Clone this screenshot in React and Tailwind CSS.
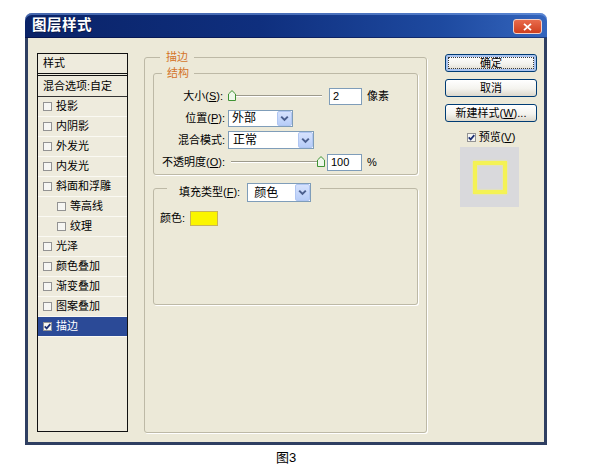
import React from "react";

function Check({ checked }) {
  return (
    <span className="w-[9px] h-[9px] border border-[#939393] bg-[#f6f6f3] flex items-center justify-center shrink-0">
      {checked && (
        <svg width="7" height="7" viewBox="0 0 7 7">
          <path d="M0.7 3.3 L2.7 5.4 L6.3 1.1" stroke="#1b2f74" strokeWidth="1.7" fill="none" />
        </svg>
      )}
    </span>
  );
}

function Arrow() {
  return (
    <span className="w-[15px] h-full bg-[linear-gradient(to_bottom,#d6e2fd,#b7cdf8)] border border-[#b0c6f2] rounded-[2px] flex items-center justify-center shrink-0">
      <svg width="9" height="7" viewBox="0 0 9 7">
        <path d="M1.2 1.6 L4.5 4.9 L7.8 1.6" stroke="#4b5f8e" strokeWidth="2" fill="none" />
      </svg>
    </span>
  );
}

function Thumb() {
  return (
    <svg width="8" height="11" viewBox="0 0 8 11">
      <path d="M0.5 4 L4 0.6 L7.5 4 L7.5 10.5 L0.5 10.5 Z" fill="#eef7ea" stroke="#3f9334" strokeWidth="1" />
    </svg>
  );
}

function Track({ className }) {
  return <div className={"h-[2px] border-t border-[#9d9a8c] bg-white " + className}></div>;
}

function Button({ children, primary }) {
  return (
    <div
      className={
        "h-[18px] w-full rounded-[3px] border border-[#003c74] bg-[linear-gradient(to_bottom,#ffffff_0%,#f4f3ee_55%,#dcd8cc_100%)] flex items-stretch text-[11px] leading-none text-black " +
        (primary ? "p-[2px] shadow-[inset_0_0_0_2px_#a9c3ef]" : "p-[1px]")
      }
    >
      <span
        className={
          "flex-1 flex items-center justify-center " +
          (primary ? "border border-dotted border-[#3a3a3a]" : "")
        }
      >
        {children}
      </span>
    </div>
  );
}

const items = [
  { t: "投影" },
  { t: "内阴影" },
  { t: "外发光" },
  { t: "内发光" },
  { t: "斜面和浮雕" },
  { t: "等高线", i: true },
  { t: "纹理", i: true },
  { t: "光泽" },
  { t: "颜色叠加" },
  { t: "渐变叠加" },
  { t: "图案叠加" },
  { t: "描边", sel: true },
];

export default function App() {
  return (
    <div className="w-[591px] h-[472px] bg-white pt-[13px] pl-[25px] font-['Liberation_Sans','Noto_Sans_CJK_SC',sans-serif] text-black overflow-hidden">
      <div className="w-[522px] flex flex-col">
        {/* Title bar */}
        <div className="h-[25px] rounded-t-[7px] bg-[linear-gradient(to_right,#0a2368_0%,#0f2f7e_45%,#1e4aa0_80%,#3465bd_100%)] shadow-[inset_0_2px_0_rgba(120,160,230,0.55),inset_0_-1px_0_rgba(0,0,40,0.4)] flex items-center justify-between pl-[7px] pr-[5px]">
          <span className="text-white font-bold text-[14.5px] leading-none tracking-[0.5px] [text-shadow:1px_1px_0_#0a1a48]">
            图层样式
          </span>
          <span className="w-[29px] h-[15px] mt-[2px] rounded-[3px] border border-[#f2d0c6] bg-[linear-gradient(to_bottom,#e96b4c,#cf3f1f)] flex items-center justify-center">
            <svg width="9" height="8" viewBox="0 0 9 8">
              <path d="M1 0.8 L8 7.2 M8 0.8 L1 7.2" stroke="white" strokeWidth="1.8" />
            </svg>
          </span>
        </div>

        {/* Body */}
        <div className="h-[407px] bg-[#ece9d8] border-x-[3px] border-b-[3px] border-[#2f3f62] flex items-start pl-[9px] text-[11px] leading-none">
          {/* Left list */}
          <div className="mt-[15px] w-[91px] h-[379px] border border-[#111] bg-[#eeebdd] flex flex-col">
            <div className="h-[22px] border-b-[3px] border-double border-[#111] flex items-center pl-[5px]">
              样式
            </div>
            <div className="h-[21px] border-b border-[#333] flex items-center pl-[5px]">
              混合选项:自定
            </div>
            {items.map((it) => (
              <div
                key={it.t}
                className={
                  "h-[20px] flex items-center gap-[4px] border-b border-[#faf9f3] " +
                  (it.i ? "pl-[19px] " : "pl-[5px] ") +
                  (it.sel ? "bg-[#2b4a97] text-white border-[#b9c8ea]" : "")
                }
              >
                <Check checked={it.sel} />
                <span>{it.t}</span>
              </div>
            ))}
          </div>

          {/* Middle: 描边 */}
          <fieldset className="ml-[16px] mt-[11px] w-[283px] h-[384px] border border-[#bdb9a6] rounded-[3px] shadow-[1px_1px_0_#ffffff] pl-[8px] pr-[8px]">
            <legend className="ml-[7px] px-[6px] text-[#d4742a] leading-[16px] text-[11px]">描边</legend>

            <fieldset className="border border-[#bdb9a6] rounded-[3px] shadow-[1px_1px_0_#ffffff] pt-[6px] pb-[3px]">
              <legend className="ml-[8px] px-[5px] text-[#d4742a] leading-[16px]">结构</legend>
              <div className="flex flex-col gap-[4px]">
                {/* 大小 */}
                <div className="h-[18px] flex items-center">
                  <span className="w-[69px] text-right">
                    大小(<span className="underline">S</span>):
                  </span>
                  <div className="ml-[5px] w-[94px] h-full relative flex items-center">
                    <Track className="w-full" />
                    <span className="absolute left-0 top-[3px]">
                      <Thumb />
                    </span>
                  </div>
                  <div className="ml-[7px] w-[33px] h-[17px] bg-white border border-[#7f9db9] flex items-center pl-[3px] text-[11px]">
                    2
                  </div>
                  <span className="ml-[5px]">像素</span>
                </div>
                {/* 位置 */}
                <div className="h-[18px] flex items-center">
                  <span className="w-[71px] text-right">
                    位置(<span className="underline">P</span>):
                  </span>
                  <div className="ml-[3px] w-[65px] h-[17px] bg-white border border-[#7f9db9] flex items-center justify-between">
                    <span className="pl-[3px] text-[12px]">外部</span>
                    <Arrow />
                  </div>
                </div>
                {/* 混合模式 */}
                <div className="h-[18px] flex items-center">
                  <span className="w-[71px] text-right">混合模式:</span>
                  <div className="ml-[3px] w-[86px] h-[18px] bg-white border border-[#7f9db9] flex items-center justify-between">
                    <span className="pl-[4px] text-[12px]">正常</span>
                    <Arrow />
                  </div>
                </div>
                {/* 不透明度 */}
                <div className="h-[18px] flex items-center">
                  <span className="w-[71px] text-right">
                    不透明度(<span className="underline">O</span>):
                  </span>
                  <div className="ml-[6px] w-[94px] h-full relative flex items-center">
                    <Track className="w-[88px]" />
                    <span className="absolute right-0 top-[3px]">
                      <Thumb />
                    </span>
                  </div>
                  <div className="ml-[2px] w-[35px] h-[17px] bg-white border border-[#7f9db9] flex items-center pl-[3px] text-[11px]">
                    100
                  </div>
                  <span className="ml-[5px]">%</span>
                </div>
              </div>
            </fieldset>

            <fieldset className="h-[130px] border border-[#bdb9a6] rounded-[3px] shadow-[1px_1px_0_#ffffff] pl-[6px]">
              <legend className="ml-[7px] pl-[12px] pr-[9px] pt-[8px]">
                <div className="flex items-center">
                  <span>
                    填充类型(<span className="underline">F</span>):
                  </span>
                  <div className="ml-[7px] w-[64px] h-[19px] bg-white border border-[#7f9db9] flex items-center justify-between">
                    <span className="pl-[6px] text-[12px]">颜色</span>
                    <Arrow />
                  </div>
                </div>
              </legend>
              <div className="mt-[9px] flex items-center">
                <span>颜色:</span>
                <span className="ml-[5px] w-[28px] h-[15px] bg-[#fbf500] border border-[#c8b45a]"></span>
              </div>
            </fieldset>
          </fieldset>

          {/* Right column */}
          <div className="ml-[18px] mt-[16px] w-[92px] flex flex-col gap-[7px]">
            <Button primary>确定</Button>
            <Button>取消</Button>
            <Button>
              新建样式(<span className="underline">W</span>)...
            </Button>
            <div className="mt-[1px] h-[14px] flex items-center justify-center gap-[3px] text-[11px]">
              <Check checked />
              <span>
                预览(<span className="underline">V</span>)
              </span>
            </div>
            <div className="-mt-[4px] ml-[15px] w-[59px] h-[60px] bg-[#d9d9dc] flex items-center justify-center">
              <div className="w-[34px] h-[33px] border-[4px] border-[#f4f255] shadow-[0_0_2px_#f6f27a,inset_0_0_2px_#f6f27a]"></div>
            </div>
          </div>
        </div>
      </div>
      <div className="w-[522px] mt-[5px] text-center text-[13px] leading-[16px]">图3</div>
    </div>
  );
}
